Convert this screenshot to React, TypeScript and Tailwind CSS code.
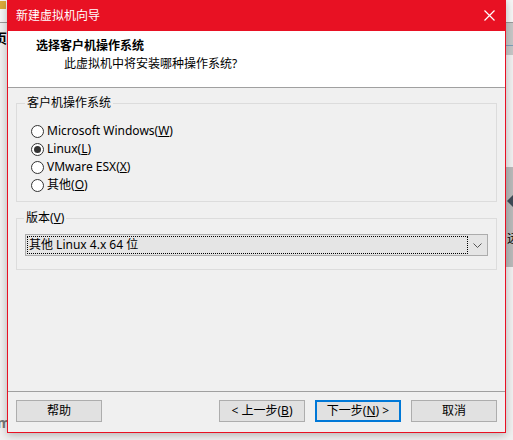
import React from "react";

const font = { fontFamily: '"Noto Sans", "Noto Sans CJK SC", sans-serif' };

function Radio({ checked, label, u, rest }: { checked?: boolean; label: string; u: string; rest: string }) {
  return (
    <div className="flex items-center h-[18px] gap-[3px]">
      <span className="w-[13px] h-[13px] rounded-full border border-[#333] bg-white flex items-center justify-center">
        {checked && <span className="w-[7px] h-[7px] rounded-full bg-[#333]" />}
      </span>
      <span className="text-[12px] text-black leading-none">
        {label}(<span className="underline">{u}</span>){rest}
      </span>
    </div>
  );
}

function Btn({ children, primary }: { children: React.ReactNode; primary?: boolean }) {
  return (
    <div
      className={
        "w-[86px] h-[22px] flex items-center justify-center text-[12px] text-black bg-[#e1e1e1] " +
        (primary ? "border-2 border-[#0078d7]" : "border border-[#adadad]")
      }
    >
      {children}
    </div>
  );
}

export default function App() {
  return (
    <div className="relative w-[513px] h-[440px] bg-[#f0f0f0] overflow-hidden" style={font}>
      {/* background windows */}
      <div className="absolute left-0 top-0 w-[7px] h-[22px] bg-[#f5f5f5]">
        <div className="w-[6px] h-[8px] bg-[#d9a93a] mt-[1px]" />
      </div>
      <div className="absolute left-0 top-[22px] w-[7px] h-[1px] bg-[#9a9a9a]" />
      <div className="absolute left-0 top-[32px] w-[7px] text-[13px] font-bold leading-none overflow-hidden">
        <span className="ml-[-6px]">页</span>
      </div>
      <div className="absolute left-0 top-[416px] w-[7px] text-[14px] font-bold leading-none text-[#777] overflow-hidden">
        <span className="ml-[-3px]">m</span>
      </div>
      <div className="absolute right-0 top-0 w-[7px] h-[440px] bg-[#f0f0f0]">
        <div className="h-[22px] bg-[#f5f5f5]" />
        <div className="h-[33px] bg-[#c6c6c6] border-t border-[#999]">
          <div className="mt-[22px] h-[1px] bg-[#7f9db9]" />
        </div>
        <div className="h-[112px] bg-[#f0f0f0]" />
        <div className="h-[100px] bg-[#b9b9b9] relative">
          <div className="absolute left-[1px] top-[28px] w-0 h-0 border-y-[6px] border-y-transparent border-r-[6px] border-r-[#3e4a55]" />
          <div className="absolute left-[1px] top-[66px] text-[12px] leading-none overflow-hidden w-[6px]">远</div>
        </div>
      </div>

      {/* dialog window */}
      <div className="absolute left-[7px] top-0 w-[499px] h-[433px] border border-[#e81123] border-t-0 bg-[#f0f0f0] flex flex-col shadow-[0_2px_8px_rgba(0,0,0,0.25)]">
        <div className="h-[31px] bg-[#e81123] flex items-center justify-between pl-[8px] pr-[10px]">
          <span className="text-white text-[12px]">新建虚拟机向导</span>
          <svg width="11" height="11" viewBox="0 0 11 11">
            <path d="M0.5 0.5 L10.5 10.5 M10.5 0.5 L0.5 10.5" stroke="white" strokeWidth="1.2" />
          </svg>
        </div>
        <div className="h-[57px] bg-white border-b border-[#a0a0a0] pl-[28px] pt-[6px]">
          <div className="text-[12px] font-bold text-black leading-[18px]">选择客户机操作系统</div>
          <div className="text-[12px] text-black leading-[18px] pl-[28px]">此虚拟机中将安装哪种操作系统?</div>
        </div>

        <div className="flex-1 px-[8px] pt-[9px] flex flex-col">
          <fieldset className="border border-[#dcdcdc] h-[105px] px-[14px] pt-[6px] pb-0 m-0">
            <legend className="text-[12px] text-black px-[2px] ml-[-6px] leading-none">客户机操作系统</legend>
            <div className="flex flex-col mt-[7px]">
              <Radio label="Microsoft Windows" u="W" rest="" />
              <Radio checked label="Linux" u="L" rest="" />
              <Radio label="VMware ESX" u="X" rest="" />
              <Radio label="其他" u="O" rest="" />
            </div>
          </fieldset>

          <fieldset className="border border-[#dcdcdc] h-[58px] mt-[10px] px-[8px] m-0">
            <legend className="text-[12px] text-black px-[2px] ml-[-1px] leading-none">版本(<span className="underline">V</span>)</legend>
            <div className="mt-[10px] h-[22px] bg-[#e5e5e5] border border-[#acacac] flex items-center p-[1px]">
              <div className="flex-1 h-full border border-dotted border-black flex items-center pl-[1px] text-[12px] text-black">
                其他 Linux 4.x 64 位
              </div>
              <div className="w-[18px] flex items-center justify-center">
                <svg width="9" height="5" viewBox="0 0 9 5">
                  <path d="M0.5 0.5 L4.5 4.5 L8.5 0.5" stroke="#555" fill="none" strokeWidth="1" />
                </svg>
              </div>
            </div>
          </fieldset>
        </div>

        <div className="border-t border-[#a0a0a0] h-[41px] flex items-center px-[8px] pb-[2px]">
          <Btn>帮助</Btn>
          <div className="flex-1" />
          <div className="flex gap-[10px]">
            <Btn>&lt; 上一步(<span className="underline">B</span>)</Btn>
            <Btn primary>下一步(<span className="underline">N</span>) &gt;</Btn>
            <Btn>取消</Btn>
          </div>
        </div>
      </div>
    </div>
  );
}
